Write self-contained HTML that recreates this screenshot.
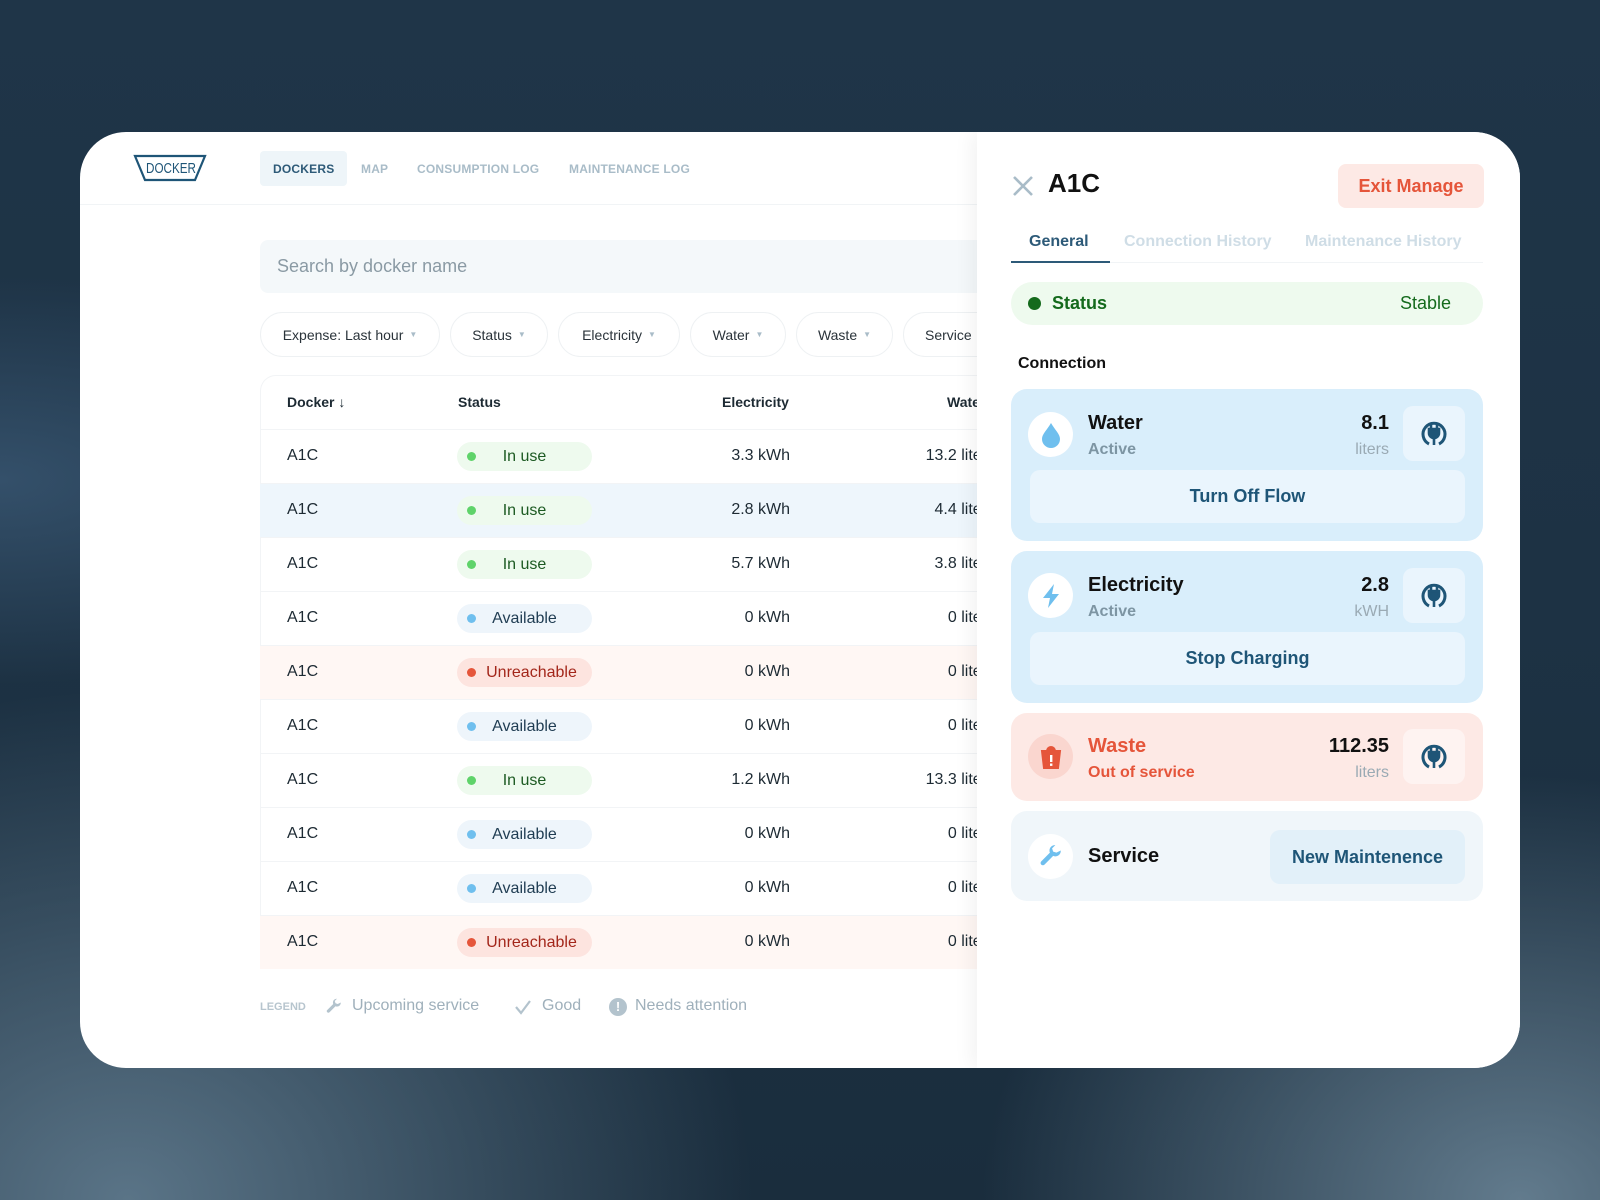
<!DOCTYPE html>
<html><head><meta charset="utf-8"><style>
*{box-sizing:border-box;margin:0;padding:0}
body{width:1600px;height:1200px;overflow:hidden;font-family:"Liberation Sans",sans-serif;color:#1d2a33;
background:radial-gradient(ellipse at 8% 100%,#5a7487 0,transparent 30%),radial-gradient(ellipse at 95% 100%,#627b8d 0,transparent 25%),radial-gradient(ellipse at 0% 40%,#34506a 0,transparent 20%),linear-gradient(180deg,#1f3548 0%,#1d3244 50%,#1a2d3d 100%);position:relative}
.card{position:absolute;left:80px;top:132px;width:1440px;height:936px;background:#fff;border-radius:46px;overflow:hidden}
.abs{position:absolute}
.nav{font-size:12px;font-weight:bold;color:#a9bcc8;letter-spacing:.2px}
.pill{position:absolute;top:180px;height:45px;border:1px solid #eef1f3;border-radius:23px;font-size:14px;display:flex;align-items:center;justify-content:center;color:#2a333a}
.pill i{font-style:normal;color:#a9bcc8;font-size:8px;margin-left:6px}
.row{position:absolute;left:180px;width:720px;height:54px;border-top:1px solid #f2f4f6;font-size:16px}
.row span{position:absolute;top:17px}
.badge{position:absolute;left:197px;top:12px;width:135px;height:29px;border-radius:15px;font-size:16px;display:flex;align-items:center}
.badge b{width:9px;height:9px;border-radius:50%;position:absolute;left:10px;top:10px}
.panel{position:absolute;left:897px;top:0;width:543px;height:936px;background:#fff;box-shadow:-6px 0 18px rgba(0,0,0,.05)}
.box{position:absolute;left:34px;width:472px;border-radius:16px}
.ic{position:absolute;width:45px;height:45px;border-radius:50%;background:#fff;display:flex;align-items:center;justify-content:center}
.t{position:absolute;font-size:20px;font-weight:bold;color:#111}
.s{position:absolute;font-size:16px;font-weight:bold;color:#7d95a3}
.v{position:absolute;font-size:20px;font-weight:bold;color:#111;text-align:right}
.u{position:absolute;font-size:16px;color:#9aaab4;text-align:right}
.plug{position:absolute;width:62px;height:55px;background:#eaf5fd;border-radius:10px;display:flex;align-items:center;justify-content:center}
.btn{position:absolute;background:#eaf5fd;border-radius:10px;font-size:18px;font-weight:bold;color:#1e5577;display:flex;align-items:center;justify-content:center}
</style></head><body>
<div class="card">
 <svg class="abs" style="left:53px;top:22px" width="74" height="28" viewBox="0 0 74 28"><path d="M2 2H72L62 26H12Z" fill="none" stroke="#1e5577" stroke-width="2.2"/><text x="13" y="19" font-size="15" fill="#1e5577" font-family="Liberation Sans" textLength="50" lengthAdjust="spacingAndGlyphs">DOCKER</text></svg>
 <div class="abs" style="left:180px;top:19px;width:87px;height:35px;background:#eef5f9;border-radius:4px"></div>
 <div class="abs nav" style="left:193px;top:30px;color:#2d5a78">DOCKERS</div>
 <div class="abs nav" style="left:281px;top:30px">MAP</div>
 <div class="abs nav" style="left:337px;top:30px">CONSUMPTION LOG</div>
 <div class="abs nav" style="left:489px;top:30px">MAINTENANCE LOG</div>
 <div class="abs" style="left:0;top:72px;width:900px;height:1px;background:#f1f4f6"></div>
 <div class="abs" style="left:180px;top:108px;width:740px;height:53px;background:#f4f8fa;border-radius:8px;font-size:18px;color:#8a9aa4;padding:16px 0 0 17px">Search by docker name</div>
 <div class="pill" style="left:180px;width:180px">Expense: Last hour<i>▼</i></div>
 <div class="pill" style="left:370px;width:98px">Status<i>▼</i></div>
 <div class="pill" style="left:478px;width:122px">Electricity<i>▼</i></div>
 <div class="pill" style="left:610px;width:96px">Water<i>▼</i></div>
 <div class="pill" style="left:716px;width:97px">Waste<i>▼</i></div>
 <div class="pill" style="left:823px;width:100px;justify-content:flex-start;padding-left:21px">Service</div>
 <div class="abs" style="left:180px;top:243px;width:740px;height:594px;border:1px solid #f2f4f6;border-radius:16px"></div>
 <div class="abs" style="left:207px;top:262px;font-size:14px;font-weight:bold">Docker ↓</div>
 <div class="abs" style="left:378px;top:262px;font-size:14px;font-weight:bold">Status</div>
 <div class="abs" style="left:642px;top:262px;font-size:14px;font-weight:bold">Electricity</div>
 <div class="abs" style="left:867px;top:262px;font-size:14px;font-weight:bold">Water</div>
 <div id="rows"></div>
 <div class="abs" style="left:180px;top:869px;font-size:11px;font-weight:bold;color:#b7c5ce">LEGEND</div>
 <svg class="abs" style="left:245px;top:866px" width="18" height="18" viewBox="0 0 24 24"><path d="M21 6a5 5 0 0 1-7 5L6 19a2 2 0 0 1-3-3l8-8a5 5 0 0 1 5-7l-3 3 1 3 3 1z" fill="#b3c3cd"/></svg>
 <div class="abs" style="left:272px;top:865px;font-size:16px;color:#9fb0bb">Upcoming service</div>
 <svg class="abs" style="left:434px;top:867px" width="18" height="16" viewBox="0 0 18 16"><path d="M2 8l5 6L16 2" fill="none" stroke="#b3c3cd" stroke-width="2.2"/></svg>
 <div class="abs" style="left:462px;top:865px;font-size:16px;color:#9fb0bb">Good</div>
 <div class="abs" style="left:529px;top:866px;width:18px;height:18px;border-radius:50%;background:#b3c3cd;color:#fff;font-size:13px;font-weight:bold;text-align:center;line-height:18px">!</div>
 <div class="abs" style="left:555px;top:865px;font-size:16px;color:#9fb0bb">Needs attention</div>

 <div class="panel">
  <svg class="abs" style="left:35px;top:43px" width="22" height="22" viewBox="0 0 22 22"><path d="M2 2L20 20M20 2L2 20" stroke="#a9bcc8" stroke-width="2.6"/></svg>
  <div class="abs" style="left:71px;top:36px;font-size:26px;font-weight:bold;color:#111">A1C</div>
  <div class="abs" style="left:361px;top:32px;width:146px;height:44px;background:#fde9e5;border-radius:8px;color:#e5553a;font-size:18px;font-weight:bold;display:flex;align-items:center;justify-content:center">Exit Manage</div>
  <div class="abs" style="left:52px;top:101px;font-size:16px;font-weight:bold;color:#2d5a78">General</div>
  <div class="abs" style="left:147px;top:101px;font-size:16px;font-weight:bold;color:#cfdde6">Connection History</div>
  <div class="abs" style="left:328px;top:101px;font-size:16px;font-weight:bold;color:#cfdde6">Maintenance History</div>
  <div class="abs" style="left:34px;top:129px;width:99px;height:2px;background:#2d5a78"></div>
  <div class="abs" style="left:133px;top:130px;width:373px;height:1px;background:#f1f4f6"></div>
  <div class="box" style="top:150px;height:43px;background:#eefaee;border-radius:22px"></div>
  <div class="abs" style="left:51px;top:165px;width:13px;height:13px;border-radius:50%;background:#146a1c"></div>
  <div class="abs" style="left:75px;top:161px;font-size:18px;font-weight:bold;color:#146a1c">Status</div>
  <div class="abs" style="left:423px;top:161px;font-size:18px;color:#146a1c">Stable</div>
  <div class="abs" style="left:41px;top:223px;font-size:16px;font-weight:bold;color:#111">Connection</div>

  <div class="box" style="top:257px;height:152px;background:#d9eefb"></div>
  <div class="ic" style="left:51px;top:280px"><svg width="22" height="26" viewBox="0 0 22 26"><path d="M11 1C7 8 2 12 2 17a9 9 0 0 0 18 0c0-5-5-9-9-16z" fill="#6fbfee"/></svg></div>
  <div class="t" style="left:111px;top:280px">Water</div>
  <div class="s" style="left:111px;top:309px">Active</div>
  <div class="v" style="left:292px;top:280px;width:120px">8.1</div>
  <div class="u" style="left:292px;top:309px;width:120px">liters</div>
  <div class="plug" style="left:426px;top:274px"><svg width="28" height="28" viewBox="0 0 28 28"><path d="M9 24A11 11 0 1 1 19 24" fill="none" stroke="#1e5577" stroke-width="3"/><path d="M9 9v4a5 5 0 0 0 10 0V9zM11 5v4M17 5v4M14 18v7" stroke="#1e5577" stroke-width="2.6" fill="#1e5577"/></svg></div>
  <div class="btn" style="left:53px;top:338px;width:435px;height:53px">Turn Off Flow</div>

  <div class="box" style="top:419px;height:152px;background:#d9eefb"></div>
  <div class="ic" style="left:51px;top:441px"><svg width="22" height="26" viewBox="0 0 22 26"><path d="M14 1L3 15h7l-2 10 11-14h-7z" fill="#6fbfee"/></svg></div>
  <div class="t" style="left:111px;top:442px">Electricity</div>
  <div class="s" style="left:111px;top:471px">Active</div>
  <div class="v" style="left:292px;top:442px;width:120px">2.8</div>
  <div class="u" style="left:292px;top:471px;width:120px">kWH</div>
  <div class="plug" style="left:426px;top:436px"><svg width="28" height="28" viewBox="0 0 28 28"><path d="M9 24A11 11 0 1 1 19 24" fill="none" stroke="#1e5577" stroke-width="3"/><path d="M9 9v4a5 5 0 0 0 10 0V9zM11 5v4M17 5v4M14 18v7" stroke="#1e5577" stroke-width="2.6" fill="#1e5577"/></svg></div>
  <div class="btn" style="left:53px;top:500px;width:435px;height:53px">Stop Charging</div>

  <div class="box" style="top:581px;height:88px;background:#fde9e5"></div>
  <div class="ic" style="left:51px;top:602px;background:#fad6cf"><svg width="24" height="26" viewBox="0 0 24 26"><path d="M3 7h18l-2 17H5zM8 7a4 4 0 0 1 8 0" fill="#e5553a" stroke="#e5553a" stroke-width="2"/><rect x="11" y="11" width="2.4" height="7" fill="#fff"/><rect x="11" y="19.5" width="2.4" height="2.4" fill="#fff"/></svg></div>
  <div class="t" style="left:111px;top:603px;color:#e5553a">Waste</div>
  <div class="s" style="left:111px;top:632px;color:#e5553a">Out of service</div>
  <div class="v" style="left:292px;top:603px;width:120px">112.35</div>
  <div class="u" style="left:292px;top:632px;width:120px">liters</div>
  <div class="plug" style="left:426px;top:597px;background:#fef3f1"><svg width="28" height="28" viewBox="0 0 28 28"><path d="M9 24A11 11 0 1 1 19 24" fill="none" stroke="#1e5577" stroke-width="3"/><path d="M9 9v4a5 5 0 0 0 10 0V9zM11 5v4M17 5v4M14 18v7" stroke="#1e5577" stroke-width="2.6" fill="#1e5577"/></svg></div>

  <div class="box" style="top:679px;height:90px;background:#f0f6fa"></div>
  <div class="ic" style="left:51px;top:702px"><svg width="26" height="26" viewBox="0 0 24 24"><path d="M21 6a5 5 0 0 1-7 5L6 19a2 2 0 0 1-3-3l8-8a5 5 0 0 1 5-7l-3 3 1 3 3 1z" fill="#6fbfee"/></svg></div>
  <div class="t" style="left:111px;top:713px">Service</div>
  <div class="btn" style="left:293px;top:698px;width:195px;height:54px;background:#e2f0f9">New Maintenence</div>
 </div>
</div>
<script>
var d=[["In use","3.3 kWh","13.2 liters",0],["In use","2.8 kWh","4.4 liters",0,1],["In use","5.7 kWh","3.8 liters",0],["Available","0 kWh","0 liters",1],["Unreachable","0 kWh","0 liters",2],["Available","0 kWh","0 liters",1],["In use","1.2 kWh","13.3 liters",0],["Available","0 kWh","0 liters",1],["Available","0 kWh","0 liters",1],["Unreachable","0 kWh","0 liters",2]];
var st=[["#eefaee","#5fd36a","#1c5a22"],["#eef5fb","#6fbfee","#1f3c52"],["#fde4df","#e5553a","#a3261a"]];
var h="";d.forEach(function(r,i){var s=st[r[3]];var bg=r[4]?"#eef6fc":(r[3]==2?"#fff7f4":"transparent");
h+='<div class="row" style="top:'+(297+54*i)+'px;background:'+bg+'"><span style="left:27px">A1C</span><div class="badge" style="background:'+s[0]+';color:'+s[2]+';justify-content:center;padding-left:'+(r[3]==2?14:0)+'px"><b style="background:'+s[1]+'"></b>'+r[0]+'</div><span style="right:190px">'+r[1]+'</span><span style="white-space:nowrap;text-align:right;width:130px;left:605px">'+r[2]+'</span></div>'});
document.getElementById("rows").innerHTML=h;
</script>
</body></html>
